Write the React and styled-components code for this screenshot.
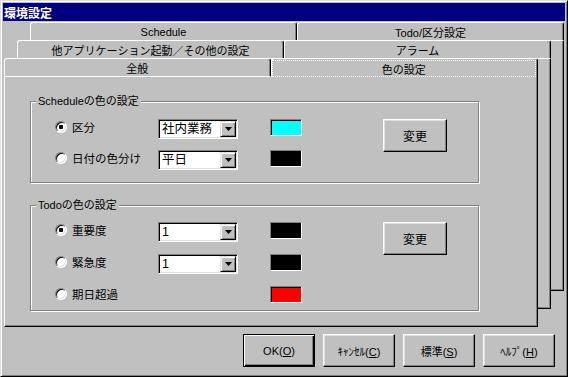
import React from "react";
import styled, { createGlobalStyle } from "styled-components";

const GlobalStyle = createGlobalStyle`
  html, body {
    margin: 0;
    padding: 0;
    background: #c0c0c0;
  }
  body {
    font-family: "Liberation Sans", "Noto Sans CJK JP", sans-serif;
    font-size: 11px;
    color: #000;
  }
`;

const Window = styled.div`
  width: 568px;
  height: 377px;
  box-sizing: border-box;
  background: #c0c0c0;
  border: 1px solid;
  border-color: #dfdfdf #000 #000 #dfdfdf;
  box-shadow: inset 1px 1px #fff, inset -1px -1px #808080;
  padding: 2px;
  display: flex;
  flex-direction: column;
`;

const TitleBar = styled.div`
  height: 18px;
  flex-shrink: 0;
  background: #000080;
  color: #fff;
  font-size: 12px;
  font-weight: bold;
  display: flex;
  align-items: center;
  padding-left: 1px;
`;

const Stack = styled.div`
  display: grid;
  width: 560px;
  height: 305px;
  margin: 1px 0 0 1px;
`;

const Layer = styled.div`
  grid-area: 1 / 1;
  margin-left: ${(p) => p.$left}px;
  margin-top: ${(p) => p.$top}px;
  width: 534px;
  height: 269px;
  display: flex;
  flex-direction: column;
`;

const TabRow = styled.div`
  display: flex;
  height: 19px;
  flex-shrink: 0;
`;

const Tab = styled.div`
  flex: 1;
  box-sizing: border-box;
  display: flex;
  align-items: stretch;
  background: #c0c0c0;
  border-top: 1px solid #fff;
  border-left: 1px solid #fff;
  border-right: 1px solid #000;
  border-bottom: ${(p) => (p.$active ? "none" : "1px solid #fff")};
  border-radius: 3px 3px 0 0;
  box-shadow: inset -1px 0 #808080;
  padding: ${(p) => (p.$active ? "1px 1px 0 0" : "0")};
`;

const TabLabel = styled.div`
  flex: 1;
  display: flex;
  align-items: center;
  justify-content: center;
  box-sizing: border-box;
  border: 1px dotted ${(p) => (p.$focus ? "#fff" : "transparent")};
  padding-top: ${(p) => (p.$focus ? "0" : "1px")};
`;

const Page = styled.div`
  flex: 1;
  box-sizing: border-box;
  background: #c0c0c0;
  border-left: 1px solid #fff;
  border-right: 1px solid #000;
  border-bottom: 1px solid #000;
  box-shadow: inset -1px -1px #808080;
  padding: 24px 0 0 25px;
`;

const Group = styled.div`
  position: relative;
  width: 449px;
  box-sizing: border-box;
  border: 1px solid #808080;
  box-shadow: 1px 1px 0 #fff, inset 1px 1px 0 #fff;
  padding: ${(p) => p.$pt}px 0 ${(p) => p.$pb}px 24px;
  margin-top: ${(p) => p.$mt || 0}px;
`;

const Legend = styled.div`
  position: absolute;
  top: -8px;
  left: 5px;
  padding: 0 2px;
  background: #c0c0c0;
  line-height: 14px;
`;

const GroupBody = styled.div`
  display: flex;
  align-items: flex-start;
`;

const Rows = styled.div`
  display: flex;
  flex-direction: column;
  gap: ${(p) => p.$gap}px;
`;

const Row = styled.div`
  display: grid;
  grid-template-columns: 103px 112px 32px;
  height: 20px;
  align-items: start;
`;

const RadioCell = styled.label`
  display: flex;
  align-items: center;
  gap: 5px;
  height: 16px;
  font-size: 11.5px;
`;

const Radio = styled.span`
  position: relative;
  width: 12px;
  height: 12px;
  box-sizing: border-box;
  border-radius: 50%;
  background: #fff;
  border: 1px solid;
  border-color: #808080 #fff #fff #808080;
  box-shadow: inset 1px 1px 0 #000, inset -1px -1px 0 #dfdfdf;
  &::after {
    content: "";
    display: ${(p) => (p.$checked ? "block" : "none")};
    position: absolute;
    left: 3px;
    top: 3px;
    width: 4px;
    height: 4px;
    border-radius: 1px;
    background: #000;
  }
`;

const Combo = styled.div`
  width: 80px;
  height: 20px;
  box-sizing: border-box;
  display: flex;
  background: #fff;
  border: 1px solid;
  border-color: #808080 #fff #fff #808080;
  box-shadow: inset 1px 1px 0 #000, inset -1px -1px 0 #dfdfdf;
  padding: 1px;
`;

const ComboText = styled.div`
  flex: 1;
  font-size: 12.5px;
  line-height: 16px;
  padding-left: 2px;
  white-space: nowrap;
  overflow: hidden;
`;

const DropButton = styled.div`
  width: 16px;
  height: 16px;
  box-sizing: border-box;
  background: #c0c0c0;
  border: 1px solid;
  border-color: #dfdfdf #000 #000 #dfdfdf;
  box-shadow: inset 1px 1px #fff, inset -1px -1px #808080;
  display: flex;
  align-items: center;
  justify-content: center;
`;

const Swatch = styled.div`
  grid-column: 3;
  width: 32px;
  height: 17px;
  box-sizing: border-box;
  background: ${(p) => p.$color};
  border: 1px solid;
  border-color: #808080 #fff #fff #808080;
  box-shadow: inset 1px 1px 0 #000;
`;

const Button = styled.button`
  width: ${(p) => p.$w || 72}px;
  height: 33px;
  box-sizing: border-box;
  margin: 0;
  padding: 0;
  background: #c0c0c0;
  font-family: inherit;
  font-size: ${(p) => p.$size || 11}px;
  color: #000;
  border: 1px solid;
  border-color: ${(p) => (p.$default ? "#000" : "#fff #000 #000 #fff")};
  box-shadow: ${(p) =>
    p.$default
      ? "inset 1px 1px #fff, inset -1px -1px #000, inset -2px -2px #808080"
      : "inset -1px -1px #808080, inset 1px 1px #dfdfdf"};
`;

const ChangeButton = styled(Button)`
  margin-left: 81px;
  font-size: 12px;
`;

const ButtonBar = styled.div`
  display: flex;
  justify-content: flex-end;
  gap: 8px;
  margin-top: 7px;
  padding-right: 10px;
`;

const Key = styled.span`
  text-decoration: underline;
`;

const Arrow = () => (
  <svg width="7" height="4" viewBox="0 0 7 4">
    <polygon points="0,0 7,0 3.5,4" fill="#000" />
  </svg>
);

const layers = [
  { tabs: ["Schedule", "Todo/区分設定"] },
  { tabs: ["他アプリケーション起動／その他の設定", "アラーム"] },
  { tabs: ["全般", "色の設定"], active: 1 },
];

const scheduleRows = [
  { label: "区分", checked: true, value: "社内業務", color: "#00ffff" },
  { label: "日付の色分け", value: "平日", color: "#000" },
];

const todoRows = [
  { label: "重要度", checked: true, value: "1", color: "#000" },
  { label: "緊急度", value: "1", color: "#000" },
  { label: "期日超過", color: "#ff0000" },
];

const OptionRow = ({ row }) => (
  <Row>
    <RadioCell>
      <Radio $checked={row.checked} />
      {row.label}
    </RadioCell>
    {row.value && (
      <Combo>
        <ComboText>{row.value}</ComboText>
        <DropButton>
          <Arrow />
        </DropButton>
      </Combo>
    )}
    <Swatch $color={row.color} />
  </Row>
);

const App = () => {
  return (
    <>
      <GlobalStyle />
      <Window>
        <TitleBar>環境設定</TitleBar>
        <Stack>
          {layers.map((layer, i) => (
            <Layer key={i} $left={13 * (2 - i)} $top={18 * i}>
              <TabRow>
                {layer.tabs.map((t, j) => (
                  <Tab key={t} $active={layer.active === j}>
                    <TabLabel $focus={layer.active === j}>{t}</TabLabel>
                  </Tab>
                ))}
              </TabRow>
              <Page>
                {i === 2 && (
                  <>
                    <Group $pt={17} $pb={12}>
                      <Legend>Scheduleの色の設定</Legend>
                      <GroupBody>
                        <Rows $gap={11}>
                          {scheduleRows.map((r) => (
                            <OptionRow key={r.label} row={r} />
                          ))}
                        </Rows>
                        <ChangeButton $w={64}>変更</ChangeButton>
                      </GroupBody>
                    </Group>
                    <Group $pt={16} $pb={4} $mt={22}>
                      <Legend>Todoの色の設定</Legend>
                      <GroupBody>
                        <Rows $gap={12}>
                          {todoRows.map((r) => (
                            <OptionRow key={r.label} row={r} />
                          ))}
                        </Rows>
                        <ChangeButton $w={64}>変更</ChangeButton>
                      </GroupBody>
                    </Group>
                  </>
                )}
              </Page>
            </Layer>
          ))}
        </Stack>
        <ButtonBar>
          <Button $default>
            OK(<Key>O</Key>)
          </Button>
          <Button>
            ｷｬﾝｾﾙ(<Key>C</Key>)
          </Button>
          <Button>
            標準(<Key>S</Key>)
          </Button>
          <Button>
            ﾍﾙﾌﾟ(<Key>H</Key>)
          </Button>
        </ButtonBar>
      </Window>
    </>
  );
};

export default App;
